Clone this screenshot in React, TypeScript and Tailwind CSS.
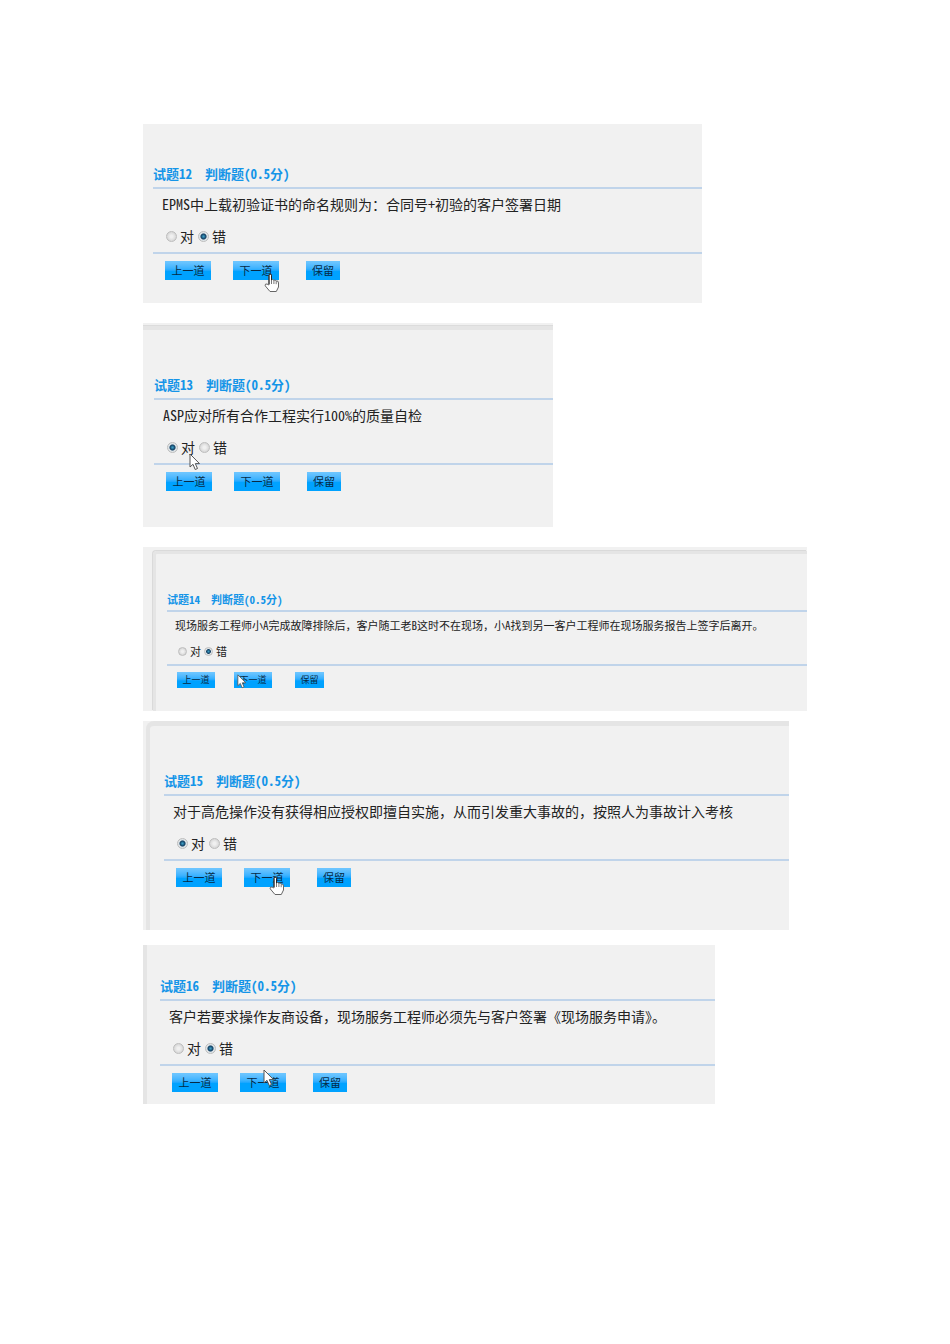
import React from 'react';

type Cursor = 'hand' | 'arrow';

interface Question {
  no: number;
  text: string;
  answer: '对' | '错';
  panel: string;
  frame: string;
  small?: boolean;
  cursor: Cursor;
  cursorOn: 'next' | 'right';
  cursorClass: string;
}

const questions: Question[] = [
  {
    no: 12,
    text: 'EPMS中上载初验证书的命名规则为：合同号+初验的客户签署日期',
    answer: '错',
    panel: 'max-w-[559px]',
    frame: 'pt-10 pl-[10px] pb-[23px]',
    cursor: 'hand',
    cursorOn: 'next',
    cursorClass: 'left-[31px] top-3',
  },
  {
    no: 13,
    text: 'ASP应对所有合作工程实行100%的质量自检',
    answer: '对',
    panel: 'mt-5 max-w-[410px] pt-[3px]',
    frame: 'border-t-4 border-[#e5e5e5] pt-[45px] pl-[11px] pb-9 shadow-[0_-1px_0_#dcdcdc]',
    cursor: 'arrow',
    cursorOn: 'right',
    cursorClass: 'left-[22px] top-4',
  },
  {
    no: 14,
    text: '现场服务工程师小A完成故障排除后，客户随工老B这时不在现场，小A找到另一客户工程师在现场服务报告上签字后离开。',
    answer: '错',
    panel: 'mt-5 max-w-[664px] pt-1 pl-[10px]',
    frame:
      'rounded-tl-sm border-t-3 border-l-3 border-[#e5e5e5] pt-[38px] pl-[11px] pb-[23px] shadow-[-1px_-1px_0_#dadada]',
    small: true,
    cursor: 'arrow',
    cursorOn: 'next',
    cursorClass: 'left-[3px] top-[2px]',
  },
  {
    no: 15,
    text: '对于高危操作没有获得相应授权即擅自实施，从而引发重大事故的，按照人为事故计入考核',
    answer: '对',
    panel: 'mt-[10px] max-w-[646px] pl-[3px]',
    frame: 'rounded-tl-lg border-t-5 border-l-4 border-[#e5e5e5] pt-[45px] pl-[14px] pb-[43px]',
    cursor: 'hand',
    cursorOn: 'next',
    cursorClass: 'left-[25px] top-2',
  },
  {
    no: 16,
    text: '客户若要求操作友商设备，现场服务工程师必须先与客户签署《现场服务申请》。',
    answer: '错',
    panel: 'mt-[15px] max-w-[572px]',
    frame: 'border-l-4 border-[#e5e5e5] pt-[31px] pl-[13px] pb-3',
    cursor: 'arrow',
    cursorOn: 'next',
    cursorClass: 'left-[23px] -top-1',
  },
];

const Pointer = ({ type, small, className }: { type: Cursor; small?: boolean; className: string }) => {
  if (type === 'hand') {
    return (
      <svg viewBox="0 0 16 20" className={`pointer-events-none absolute z-10 h-5 w-4 ${className}`} aria-hidden="true">
        <path
          d="M5 12V2.500Q5 1 6.200 1T7.500 2.500V7Q8.700 5.800 9.800 7.300Q11.200 6.300 12.200 8Q14.500 7.400 14.500 10V14L12.300 18.500H6L1.200 12.800Q.800 10.500 3 11Z"
          fill="#fff"
          stroke="#666"
          strokeWidth="1"
        />
        <path d="M5 11V2.500Q5 1 6.200 1T7.500 2.500V7" fill="none" stroke="#222" strokeWidth="1" />
        <path d="M7.500 7v4M9.900 7.500v3.500M12.200 8.200v3" stroke="#555" strokeWidth=".8" />
      </svg>
    );
  }
  return (
    <svg
      viewBox="0 0 12 18"
      className={`pointer-events-none absolute z-10 ${small ? 'h-[15px] w-[10px]' : 'h-[18px] w-3'} ${className}`}
      aria-hidden="true"
    >
      <path d="M1 1V14L4 11.300L6.200 16.500L8.500 15.500L6.300 10.600H10.500Z" fill="#fff" stroke="#555" strokeWidth="1" />
    </svg>
  );
};

const QuestionPanel = ({ q }: { q: Question }) => {
  const pointer = <Pointer type={q.cursor} small={q.small} className={q.cursorClass} />;
  const button = `relative shrink-0 bg-linear-to-b from-[#6cc5ff] from-5% via-[#3ab2ff] via-40% to-[#00a2ff] to-55% font-medium text-[#062a45] ${
    q.small ? 'h-4 text-[9px] leading-4' : 'h-[19px] text-[11px] leading-[19px]'
  }`;
  const wide = q.small ? 'w-[38px]' : 'w-[46px]';

  return (
    <section className={`w-full bg-[#f1f1f1] ${q.panel}`}>
      <div className={q.frame}>
        <h2
          className={`border-b-2 border-[#c0d4ea] font-bold whitespace-pre text-[#1595e8] ${
            q.small ? 'pb-1 text-[11px] leading-[14px]' : 'pb-[3px] text-[13px] leading-5'
          }`}
        >
          {`试题${q.no}　判断题(0.5分)`}
        </h2>
        <p
          className={`whitespace-nowrap ${
            q.small ? 'pb-[2px] pl-2 text-[11px] leading-[26px]' : 'pb-[2px] pl-[9px] text-[14px] leading-[30px]'
          }`}
        >
          {q.text}
        </p>
        <div
          className={`flex items-center border-b-2 border-[#c0d4ea] ${
            q.small ? 'h-[26px] pb-[2px] pl-[11px] text-[11px]' : 'h-[33px] pb-[1px] pl-[13px] text-[14px]'
          } ${q.small ? 'gap-[3px]' : 'gap-1'}`}
        >
          {['对', '错'].map((option) => (
            <label key={option} className="relative flex items-center gap-[3px]">
              <input
                type="radio"
                name={`question-${q.no}`}
                defaultChecked={option === q.answer}
                className={`appearance-none rounded-full border border-[#bdbdbd] bg-radial from-[#f0f0f0] from-20% to-[#d8d8d8] to-70% checked:from-[#3d9cc4] checked:from-5% checked:via-[#123f61] checked:via-40% checked:to-[#dfe5e8] checked:to-55% ${
                  q.small ? 'size-[9px]' : 'size-[11px]'
                }`}
              />
              {option}
              {q.cursorOn === 'right' && option === '对' && pointer}
            </label>
          ))}
        </div>
        <div className={`flex ${q.small ? 'pt-[6px] pl-[10px]' : 'pt-[7px] pl-3'}`}>
          <button type="button" className={`${button} ${wide}`}>
            上一道
          </button>
          <button type="button" className={`${button} ${wide} ${q.small ? 'ml-[19px]' : 'ml-[22px]'}`}>
            下一道
            {q.cursorOn === 'next' && pointer}
          </button>
          <button type="button" className={`${button} ${q.small ? 'ml-[23px] w-[29px]' : 'ml-[27px] w-[34px]'}`}>
            保留
          </button>
        </div>
      </div>
    </section>
  );
};

const App = () => {
  return (
    <main className="min-h-screen bg-white px-[143px] pt-[124px] pb-60 font-['Noto_Sans_Mono_CJK_SC','Noto_Sans_CJK_SC',sans-serif] text-[#222]">
      {questions.map((q) => (
        <QuestionPanel key={q.no} q={q} />
      ))}
    </main>
  );
};

export default App;
